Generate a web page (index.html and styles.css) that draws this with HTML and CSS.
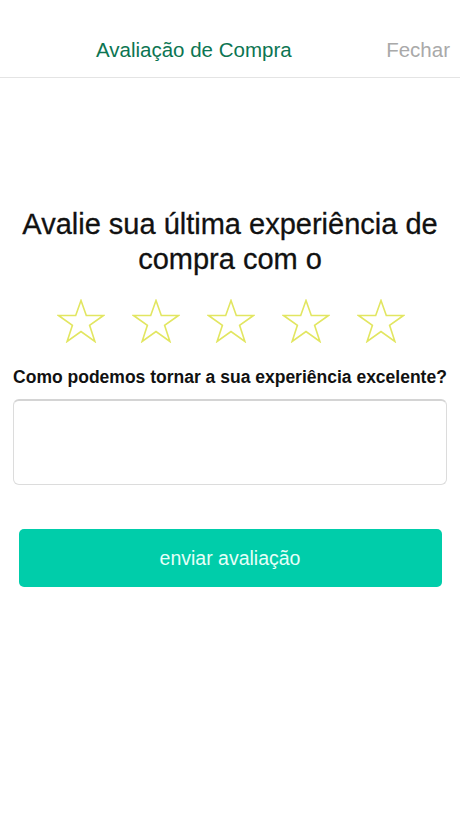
FILE: index.html
```html
<!DOCTYPE html>
<html lang="pt">
<head>
<meta charset="utf-8">
<link rel="stylesheet" href="styles.css">
</head>
<body>
<header class="nav">
  <div class="nav-title">Avaliação de Compra</div>
  <div class="nav-close">Fechar</div>
</header>
<main class="content">
  <h1 class="heading">Avalie sua última experiência de compra com o</h1>
  <div class="stars">
    <svg class="star" viewBox="0 0 48 44"><polygon points="24,1.5 29.3,16.5 46.5,16.5 32.6,26.3 37.9,42.5 24,32.5 10.1,42.5 15.4,26.3 1.5,16.5 18.7,16.5"/></svg>
    <svg class="star" viewBox="0 0 48 44"><polygon points="24,1.5 29.3,16.5 46.5,16.5 32.6,26.3 37.9,42.5 24,32.5 10.1,42.5 15.4,26.3 1.5,16.5 18.7,16.5"/></svg>
    <svg class="star" viewBox="0 0 48 44"><polygon points="24,1.5 29.3,16.5 46.5,16.5 32.6,26.3 37.9,42.5 24,32.5 10.1,42.5 15.4,26.3 1.5,16.5 18.7,16.5"/></svg>
    <svg class="star" viewBox="0 0 48 44"><polygon points="24,1.5 29.3,16.5 46.5,16.5 32.6,26.3 37.9,42.5 24,32.5 10.1,42.5 15.4,26.3 1.5,16.5 18.7,16.5"/></svg>
    <svg class="star" viewBox="0 0 48 44"><polygon points="24,1.5 29.3,16.5 46.5,16.5 32.6,26.3 37.9,42.5 24,32.5 10.1,42.5 15.4,26.3 1.5,16.5 18.7,16.5"/></svg>
  </div>
  <p class="question">Como podemos tornar a sua experiência excelente?</p>
  <div class="field"></div>
  <button class="submit">enviar avaliação</button>
</main>
</body>
</html>
```

FILE: styles.css
```css
html, body {
  margin: 0;
  padding: 0;
  background: #ffffff;
  font-family: "Liberation Sans", Arial, sans-serif;
}

.nav {
  height: 78px;
  border-bottom: 1px solid #e4e4e4;
  display: flex;
  align-items: flex-end;
  justify-content: space-between;
  padding: 0 10px 15px 96px;
  box-sizing: border-box;
}

.nav-title {
  font-size: 20.5px;
  line-height: 24px;
  color: #0c7552;
}

.nav-close {
  font-size: 20.5px;
  line-height: 24px;
  color: #a9a9a9;
}

.content {
  display: flex;
  flex-direction: column;
  align-items: center;
  padding-top: 129px;
}

.heading {
  margin: 0;
  font-weight: normal;
  font-size: 29px;
  line-height: 35px;
  color: #111111;
  text-align: center;
  width: 440px;
  -webkit-text-stroke: 0.3px #111111;
}

.stars {
  display: flex;
  gap: 27px;
  margin-top: 22px;
  margin-left: 1px;
}

.star {
  width: 48px;
  height: 44px;
  display: block;
}

.star polygon {
  fill: none;
  stroke: #e2e661;
  stroke-width: 1.6;
  stroke-linejoin: miter;
}

.question {
  margin: 23px 0 0 0;
  font-size: 17.5px;
  font-weight: bold;
  color: #111111;
  line-height: 22px;
}

.field {
  margin-top: 11px;
  width: 434px;
  height: 86px;
  box-sizing: border-box;
  border: 1px solid #dcdcdc;
  border-top: 2px solid #d4d4d4;
  border-radius: 6px;
}

.submit {
  margin-top: 44px;
  width: 423px;
  height: 58px;
  border: none;
  border-radius: 5px;
  background: #00cdaa;
  color: #e6fff8;
  font-family: "Liberation Sans", Arial, sans-serif;
  font-size: 19.5px;
  padding: 0;
}
```
